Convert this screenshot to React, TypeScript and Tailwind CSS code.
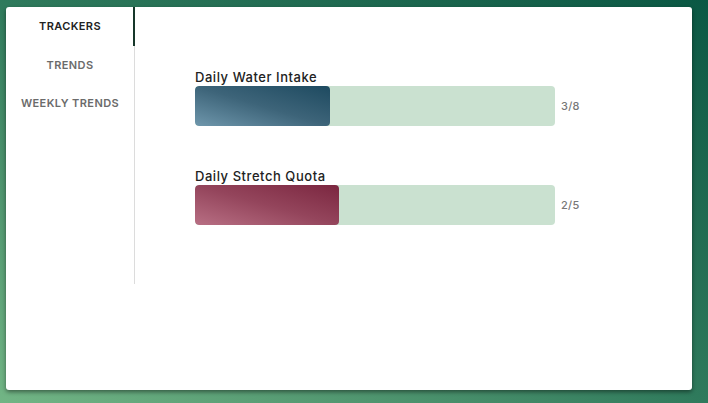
const tabs = [
    { label: "TRACKERS", active: true },
    { label: "TRENDS", active: false },
    { label: "WEEKLY TRENDS", active: false },
];

const trackers = [
    { name: "Daily Water Intake", done: 3, goal: 8, fill: "bg-linear-to-tr from-[#6f97ac] via-[#3d6479] to-[#1d4a60]" },
    { name: "Daily Stretch Quota", done: 2, goal: 5, fill: "bg-linear-to-tr from-[#b86f84] via-[#94455c] to-[#7b2640]" },
];

function TrackerBar({ name, done, goal, fill }: { name: string; done: number; goal: number; fill: string }) {
    return (
        <div className="mb-[40px]">
            <div className="text-[13px] font-medium text-[#222] leading-[16px] pt-[2px] mb-[1px] tracking-[0.55px]">{name}</div>
            <div className="flex items-center">
                <div className="w-[360px] h-[40px] rounded-[4px] bg-[#cae1d0] overflow-hidden">
                    <div className={`h-full rounded-[4px] ${fill}`} style={{ width: `${(done / goal) * 100}%` }} />
                </div>
                <span className="ml-[6px] text-[11px] font-medium text-[#777] tracking-[0.3px]">
                    {done}/{goal}
                </span>
            </div>
        </div>
    );
}

export default function App() {
    return (
        <div
            className="w-[708px] h-[403px] bg-linear-to-tr from-[#72b585] via-[#2f7a5c] to-[#0a5844] pt-[7px] pl-[6px]"
            style={{ fontFamily: "Inter, sans-serif" }}
        >
            <div className="w-[686px] h-[383px] bg-white rounded-[3px] shadow-[0_2px_4px_rgba(0,0,0,0.45)] flex">
                {/* Sidebar */}
                <div className="w-[129px] h-[277px] border-r border-[#dcdcdc] shrink-0">
                    {tabs.map((tab) => (
                        <div
                            key={tab.label}
                            className={`relative h-[38.5px] flex items-center justify-center text-[11px] font-semibold tracking-[0.4px] ${
                                tab.active ? "text-[#222]" : "text-[#6b6b6b]"
                            }`}
                        >
                            {tab.label}
                            {tab.active && <div className="absolute right-[-1px] top-0 h-full w-[2px] bg-[#16372a]" />}
                        </div>
                    ))}
                </div>

                {/* Content */}
                <div className="pl-[60px] pt-[60px] flex-1">
                    {trackers.map((t) => (
                        <TrackerBar key={t.name} {...t} />
                    ))}
                </div>
            </div>
        </div>
    );
}
